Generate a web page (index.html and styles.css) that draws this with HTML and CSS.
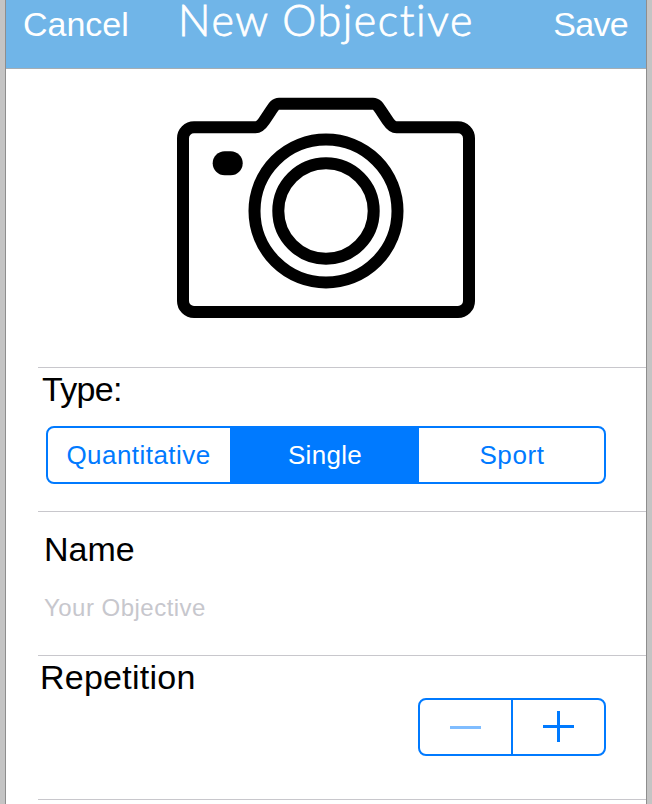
FILE: index.html
```html
<!DOCTYPE html>
<html lang="en">
<head>
<meta charset="utf-8">
<title>New Objective</title>
<link rel="stylesheet" href="styles.css">
</head>
<body>
<main class="screen">
  <header class="nav">
    <a class="nav-action"><span class="cancel">Cancel</span></a>
    <h1 class="nav-title"><span class="title-text">New Objective</span></h1>
    <a class="nav-action nav-save"><span class="save">Save</span></a>
  </header>
  <section class="photo">
    <svg class="camera" viewBox="176 97 300 222" width="300" height="222" fill="none" stroke="#000" stroke-width="12">
      <path d="M194 127.3H255.500C259.500 127.300 262 124 264.500 120.300L270.500 111.300C273 107.600 275 103.700 279 103.700H373C377 103.700 379 107.600 381.500 111.300L387.500 120.300C390 124 392.500 127.300 396.500 127.300H458A11 11 0 0 1 469 138.300V301A11 11 0 0 1 458 312H194A11 11 0 0 1 183 301V138.300A11 11 0 0 1 194 127.300Z"/>
      <circle cx="326" cy="211" r="71.500"/>
      <circle cx="326" cy="211" r="47.700"/>
      <rect x="212.700" y="151.200" width="30" height="24" rx="12" fill="#000" stroke="none"/>
    </svg>
  </section>
  <section class="row row-type">
    <h2 class="label"><span class="type">Type:</span></h2>
    <div class="segments">
      <div class="segment"><span class="quantitative">Quantitative</span></div>
      <div class="segment selected"><span class="single">Single</span></div>
      <div class="segment"><span class="sport">Sport</span></div>
    </div>
  </section>
  <section class="row row-name">
    <h2 class="label"><span class="name">Name</span></h2>
    <div class="field"><span class="placeholder">Your Objective</span></div>
  </section>
  <section class="row row-repetition">
    <h2 class="label"><span class="repetition">Repetition</span></h2>
    <div class="stepper">
      <div class="step"><svg width="92" height="54"><path d="M30 27.500H61" stroke="#80bdff" stroke-width="3"/></svg></div>
      <div class="step"><svg width="92" height="54"><path d="M30 26.500H61M45.500 11V42" stroke="#007aff" stroke-width="3"/></svg></div>
    </div>
  </section>
  <div class="row"></div>
</main>
</body>
</html>
```

FILE: styles.css
```css
* { box-sizing: border-box; }
body {
  margin: 0;
  height: 804px;
  overflow: hidden;
  background: #c4c4c4;
  font-family: "Liberation Sans", Arial, sans-serif;
}
.screen {
  width: 642px;
  height: 804px;
  margin-left: 5px;
  background: #fff;
  border: solid #8e8e8e;
  border-width: 0 1px;
  overflow: hidden;
}
h1, h2 { margin: 0; font-weight: 400; }
span { white-space: nowrap; }
.nav {
  display: grid;
  grid-template-columns: 140px 1fr 140px;
  height: 69px;
  padding: 0 17px;
  background: #70b5e8;
  border-bottom: 1px solid #a5adb3;
  color: #fff;
}
.nav-action { padding-top: 4px; font-size: 34px; line-height: 40px; }
.nav-save { padding-right: 1px; text-align: right; }
.save { letter-spacing: -0.7px; }
.nav-title {
  display: flex;
  justify-content: center;
  font: 300 43px/40px Lato, sans-serif;
  letter-spacing: 1.6px;
  -webkit-text-stroke: 0.8px #fff;
}
.photo { height: 298px; padding: 28px 0 0 170px; }
.camera { display: block; }
.row {
  height: 144px;
  margin-left: 32px;
  border-top: 1px solid #c8c7cc;
}
.label { font-size: 34px; line-height: 40px; }
.type { letter-spacing: -0.7px; }
.row-type { padding: 1px 40px 0 4px; }
.segments {
  display: grid;
  grid-template-columns: 182px 189px 1fr;
  height: 58px;
  margin: 17px 0 0 4px;
  border: 2px solid #007aff;
  border-radius: 8px;
  color: #007aff;
  font-size: 26px;
  line-height: 54px;
  text-align: center;
}
.quantitative { letter-spacing: 0.45px; margin-right: 1px; }
.single { letter-spacing: 0.3px; margin-left: 1px; }
.sport { letter-spacing: 0.6px; margin-left: 1px; }
.selected { background: #007aff; color: #fff; }
.row-name { padding: 17px 0 0 6px; }
.field { margin-top: 21px; font-size: 24px; line-height: 36px; color: #c7c7cd; }
.placeholder { letter-spacing: 0.48px; }
.row-repetition { padding: 1px 40px 0 2px; }
.repetition { letter-spacing: 0.25px; }
.stepper {
  display: flex;
  width: 188px;
  height: 58px;
  margin: 1px 0 0 auto;
  border: 2px solid #007aff;
  border-radius: 8px;
}
.step { width: 91px; }
.step + .step { width: 93px; border-left: 2px solid #007aff; }
.step svg { display: block; }
```
